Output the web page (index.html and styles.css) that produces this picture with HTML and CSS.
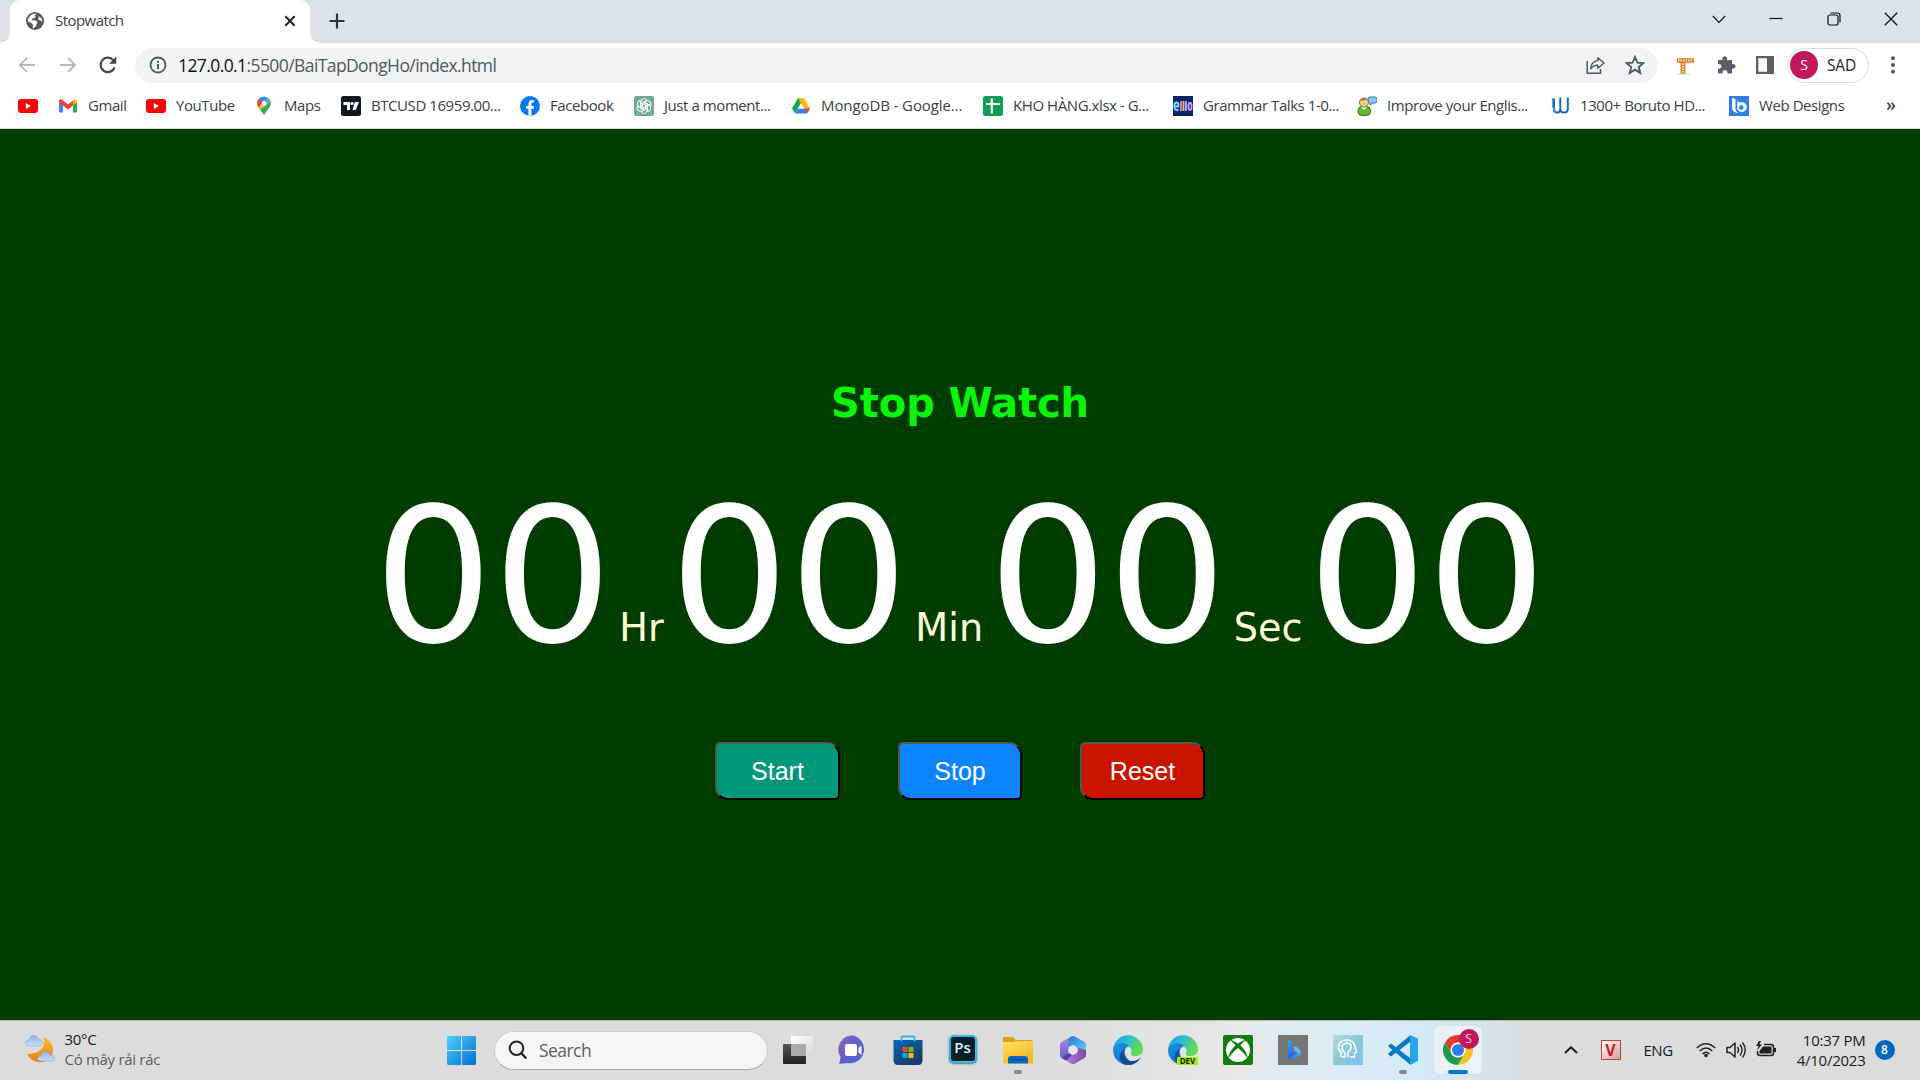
FILE: index.html
```
<!DOCTYPE html>
<html lang="en">
<head>
<meta charset="utf-8">
<title>Stopwatch</title>
<link rel="stylesheet" href="styles.css">
</head>
<body>
<header class="browser">
  <div class="tabstrip">
    <div class="tab">
      <svg class="favicon" viewBox="0 0 18 18"><circle cx="9" cy="9" r="9" fill="#54585d"/><path d="M11 1.8 8.6 3.4 9.8 5 7.5 6.4 6 6.5 5.8 8.3 9.8 8.4 11.6 10.2 10.4 13 8 16.3 6.8 16 6.9 12.4 4.8 10.8 1.8 9.6 2.4 6 5 3 8 1.8ZM13 4.2 12 7 14 8.6 16.2 9.4 15.6 6.6Z" fill="#fff"/></svg>
      <span class="tab-title">Stopwatch</span>
      <svg class="tab-close" viewBox="0 0 12 12"><path d="M1.3 1.3 10.7 10.7M10.7 1.3 1.3 10.7" stroke="#202124" stroke-width="2"/></svg>
    </div>
    <svg class="tab-new" viewBox="0 0 16 16"><path d="M8 .5V15.500M.5 8H15.500" stroke="#303236" stroke-width="2.2"/></svg>
    <div class="window-controls">
      <svg viewBox="0 0 14 14"><path d="M.8 4 7 10.500 13.200 4" fill="none" stroke="#111" stroke-width="1.200"/></svg>
      <svg viewBox="0 0 14 14"><path d="M.5 6.500H13.500" stroke="#111" stroke-width="1.200"/></svg>
      <svg viewBox="0 0 14 14"><rect x="1" y="3" width="10" height="10" rx="2" fill="none" stroke="#111" stroke-width="1.200"/><path d="M3.500 1H10.500Q13 1 13 3.500V10.500" fill="none" stroke="#111" stroke-width="1.200"/></svg>
      <svg viewBox="0 0 14 14"><path d="M.8.8 13.200 13.200M13.200.8.8 13.200" stroke="#111" stroke-width="1.300"/></svg>
    </div>
  </div>

  <div class="toolbar">
    <div class="nav-buttons">
      <svg viewBox="0 0 20 20"><path d="M18 10H3M10 2.800 2.800 10 10 17.200" fill="none" stroke="#b5b8bc" stroke-width="1.800"/></svg>
      <svg viewBox="0 0 20 20"><path d="M2 10H17M10 2.800 17.200 10 10 17.200" fill="none" stroke="#b5b8bc" stroke-width="1.800"/></svg>
      <svg viewBox="0 0 20 20"><path d="M16.600 12.300A7.200 7.200 0 1 1 15.200 5.100" fill="none" stroke="#45484d" stroke-width="2.200"/><path d="M18.300 1.500V8.700H11Z" fill="#45484d"/></svg>
    </div>
    <div class="omnibox">
      <svg class="info" viewBox="0 0 18 18"><circle cx="9" cy="9" r="7.500" fill="none" stroke="#54585d" stroke-width="1.800"/><path d="M9 8V13.200M9 4.800V6.700" stroke="#54585d" stroke-width="2"/></svg>
      <span class="url"><b class="host">127.0.0.1</b>:5500/BaiTapDongHo/index.html</span>
      <svg class="omni-icon" viewBox="0 0 20 20"><path d="M2.200 6V18.200H15.500V14" fill="none" stroke="#54585d" stroke-width="1.500"/><path d="M12.800 2.800 19 8 12.800 13.200V10.300C9.300 10 7.500 11.300 5.700 13.800 6 8.500 8.500 5.900 12.800 5.600Z" fill="none" stroke="#54585d" stroke-width="1.400" stroke-linejoin="round"/></svg>
      <svg class="omni-icon" viewBox="0 0 20 20"><path d="M10 2 12.300 7.600 18.300 8.100 13.800 12 15.200 17.900 10 14.700 4.800 17.900 6.200 12 1.700 8.100 7.700 7.600Z" fill="none" stroke="#54585d" stroke-width="1.900"/></svg>
    </div>
    <div class="extensions">
      <svg viewBox="0 0 20 20"><path d="M0 5.500H17" stroke="#d98530" stroke-width="4.600"/><path d="M6 3V18.800" stroke="#d98530" stroke-width="5"/><path d="M1 5.300H16" stroke="#ffd996" stroke-width="1.900" stroke-dasharray="1.500 1"/><path d="M6 8.500V18" stroke="#ffd996" stroke-width="2.200" stroke-dasharray="1.500 1"/><path d="M0 19.300H13" stroke="#ddd"/></svg>
      <svg viewBox="0 0 20 20"><path d="M2 5H6.500C6 2.800 7 1.300 8.800 1.300S11.500 2.800 11 5H16V9C18 8.700 19.500 9.500 19.500 11.300S18 13.800 16 13.500V18.500H11.500C11.700 16 10.500 15 9 15S6.300 16 6.500 18.500H2V13.800C4.500 14 5.500 12.800 5.500 11.300S4.500 8.800 2 9Z" fill="#5c6066"/></svg>
      <svg viewBox="0 0 20 20"><path d="M1 1H19V19H1ZM3.300 3.300V16.700H12V3.300Z" fill="#5c6066" fill-rule="evenodd"/></svg>
    </div>
    <div class="profile"><span class="avatar">S</span><span>SAD</span></div>
    <svg class="kebab" viewBox="0 0 4 18"><circle cx="2" cy="2.200" r="2"/><circle cx="2" cy="9" r="2"/><circle cx="2" cy="15.800" r="2"/></svg>
  </div>

  <nav class="bookmarks">
    <a class="bookmark"><svg viewBox="0 0 20 20"><rect y="3" width="20" height="14" rx="3" fill="#f00"/><path d="M7.800 7V13L13 10Z" fill="#fff"/></svg></a>
    <a class="bookmark"><svg viewBox="0 0 20 20"><path d="M1 5V16.500H5V9L1 5Z" fill="#4285f4"/><path d="M15 9V16.500H19V5Z" fill="#34a853"/><path d="M1 6.500V5C1 3 3.500 2.800 4.500 4L10 8.500 15.500 4 15 9.500 10 13.500 5 9.500Z" fill="#ea4335"/><path d="M15 9.500V4.400C16.500 2.800 19 3.200 19 5.500V6.500Z" fill="#fbbc04"/></svg><span>Gmail</span></a>
    <a class="bookmark"><svg viewBox="0 0 20 20"><rect y="3" width="20" height="14" rx="3" fill="#f00"/><path d="M7.800 7V13L13 10Z" fill="#fff"/></svg><span>YouTube</span></a>
    <a class="bookmark"><svg viewBox="0 0 20 20"><path d="M10 .8C5.800.8 3.300 4 3.300 7.500 3.300 12 8 14.500 10 19.500 12 14.500 16.800 12 16.800 7.500 16.800 4 14.200.8 10 .8Z" fill="#34a853"/><path d="M3.300 7.500C3.300 5.500 4 4 5 2.900L9 6 4.600 11.200C3.800 10 3.300 9 3.300 7.500Z" fill="#ea4335"/><path d="M5 2.900C7 .4 11 .2 13.500 1.900L9 6.500Z" fill="#4285f4"/><path d="M13.500 1.900C15 2.700 16 4 16.500 5.500L11 10 6.500 13.700 4.600 11.200Z" fill="#fbbc04"/><path d="M13.500 1.900 16.500 5.500 12 8 10.500 5.300Z" fill="#5b9bf5"/><circle cx="10" cy="7.400" r="2.500" fill="#fff"/></svg><span>Maps</span></a>
    <a class="bookmark"><svg viewBox="0 0 20 20"><rect width="20" height="20" rx="2.500" fill="#131722"/><path d="M2.500 6H9V14H6V9H2.500ZM13.800 6H18L14.700 14H11.500Z" fill="#fff"/><circle cx="11" cy="7.500" r="1.600" fill="#fff"/></svg><span>BTCUSD 16959.00...</span></a>
    <a class="bookmark"><svg viewBox="0 0 20 20"><circle cx="10" cy="10" r="10" fill="#0878ee"/><path d="M8.500 19.800V12.800H6V10H8.500V7.800C8.500 5.300 10 4 12.200 4L14 4.200V6.600H12.700C11.600 6.600 11.400 7.200 11.400 8V10H14L13.600 12.800H11.400V19.800Z" fill="#fff"/></svg><span>Facebook</span></a>
    <a class="bookmark"><svg viewBox="0 0 20 20"><rect width="20" height="20" rx="2" fill="#70a797"/><g fill="none" stroke="#fff" stroke-width="1"><path d="M7 11V5.500A3.300 3.300 0 0 1 13 4L8.500 6.800V10" /><path d="M7 11V5.500A3.300 3.300 0 0 1 13 4L8.500 6.800V10" transform="rotate(60 10 10)"/><path d="M7 11V5.500A3.300 3.300 0 0 1 13 4L8.500 6.800V10" transform="rotate(120 10 10)"/><path d="M7 11V5.500A3.300 3.300 0 0 1 13 4L8.500 6.800V10" transform="rotate(180 10 10)"/><path d="M7 11V5.500A3.300 3.300 0 0 1 13 4L8.500 6.800V10" transform="rotate(240 10 10)"/><path d="M7 11V5.500A3.300 3.300 0 0 1 13 4L8.500 6.800V10" transform="rotate(300 10 10)"/></g></svg><span>Just a moment...</span></a>
    <a class="bookmark wide"><svg viewBox="0 0 20 20"><path d="M7 2H13L9 9 4 17.500 1 12.500Z" fill="#11a75c"/><path d="M7 2H13L19 12.500H13Z" fill="#ffba00"/><path d="M7 12.500H19L16 17.500H4Z" fill="#3f7ee8"/><path d="M14 12.500H19L16 17.500Z" fill="#ea4335"/><path d="M10 7.200 13 12.500H7Z" fill="#fff"/></svg><span>MongoDB - Google...</span></a>
    <a class="bookmark"><svg viewBox="0 0 20 20"><rect width="20" height="20" rx="2.500" fill="#0f9d58"/><path d="M8.800 2.500V17.500M3 8H17" stroke="#fff" stroke-width="2.200"/></svg><span>KHO HÀNG.xlsx - G...</span></a>
    <a class="bookmark"><svg viewBox="0 0 20 20"><path fill="#0b2468" d="M0 0H20V20H0Z"/><g fill="none" stroke-width="1.900"><path d="M2 10.500H5.300V8Q5.300 6.500 3.500 6.500T1.500 9V12Q1.500 14 5.500 14" stroke="#76e0ed"/><path d="M8 5V15" stroke="#e678dd"/><path d="M10.500 5V15" stroke="#ddc955"/><path d="M13 5V15" stroke="#9af"/><rect x="15.500" y="7" width="3" height="7" rx="1.500" stroke="#e09af0"/></g></svg><span>Grammar Talks 1-0...</span></a>
    <a class="bookmark"><svg viewBox="0 0 20 20"><rect x="1" y="10.500" width="12.500" height="9" rx="4" fill="#62b92b" stroke="#346e20"/><path d="M4 11 7 14 10 11" fill="#fff"/><circle cx="7" cy="6.500" r="4.500" fill="#f5cc81" stroke="#946b2c"/><path d="M3 5Q5 .8 10 3L8 4Z" fill="#a7682a"/><path d="M12 1H18Q20 1 20 3V5Q20 7 18 7H16L13 9V6.500Q11 6 11 4Q11 1 12 1Z" fill="#8dc4f3" stroke="#3576bb"/></svg><span>Improve your Englis...</span></a>
    <a class="bookmark"><svg viewBox="0 0 20 20"><path d="M4 2.500V13Q4 16.500 7 16.500 10.300 16.500 10.300 13V1.500M10.300 13Q10.300 16.500 14 16.500 17.800 16.500 17.800 13V1.500" fill="none" stroke="#1769c2" stroke-width="2"/><path d="M2.500 2V11L6 16" fill="none" stroke="#51a4e5" stroke-width="1.200"/></svg><span>1300+ Boruto HD...</span></a>
    <a class="bookmark"><svg viewBox="0 0 20 20"><path fill="#2d7fe3" d="M0 0H20V20H0Z"/><path d="M3 2 6.500 3V12Q6.500 16 10 17 3 17 3 11Z" fill="#fff"/><path d="M8.500 3Q8.500 6 11 6.500A5 5 0 1 1 8 12Z" fill="#e4f1ff"/><circle cx="12.300" cy="11.500" r="2.200" fill="#2d7fe3"/></svg><span>Web Designs</span></a>
    <a class="more">»</a>
  </nav>
</header>

<main class="stopwatch">
  <h1 class="title">Stop Watch</h1>
  <div class="time">
    <div><span class="digit">00</span><span class="unit">Hr</span></div>
    <div><span class="digit">00</span><span class="unit">Min</span></div>
    <div><span class="digit">00</span><span class="unit">Sec</span></div>
    <div><span class="digit">00</span></div>
  </div>
  <div class="buttons">
    <button class="btn start">Start</button>
    <button class="btn stop">Stop</button>
    <button class="btn reset">Reset</button>
  </div>
</main>

<footer class="taskbar">
  <div class="weather">
    <svg viewBox="0 0 30 30"><defs><linearGradient id="moon" x2="0" y2="1"><stop stop-color="#f5c02d"/><stop offset="1" stop-color="#f07b18"/></linearGradient><linearGradient id="cloud" x2="0" y2="1"><stop stop-color="#8eb2ee"/><stop offset="1" stop-color="#c9dcf7"/></linearGradient></defs><path d="M18 3C22 12 16 20 2 20 6 28 17 31 24 25S29 7 18 3Z" fill="url(#moon)"/><path d="M4 12C-1 12-1 6 4 6 5 0 12 0 13 5 19 5 19 12 14 12Z" fill="url(#cloud)" stroke="#87a8dc" stroke-width=".6"/><path d="M16 27C11 27 12 22 16 22 17 16 24 16 25 21 31 21 31 27 27 27Z" fill="url(#cloud)" stroke="#87a8dc" stroke-width=".6"/></svg>
    <div class="weather-text"><span>30°C</span><span class="muted">Có mây rải rác</span></div>
  </div>
  <svg class="windows" viewBox="0 0 29 29"><defs><linearGradient id="win" x2="1" y2="1"><stop stop-color="#4cd0ff"/><stop offset="1" stop-color="#0070d0"/></linearGradient></defs><path d="M1 0H14V14H0V1ZM15 0H28L29 1V14H15ZM0 15H14V29H1L0 28ZM15 15H29V28L28 29H15Z" fill="url(#win)"/></svg>
  <div class="search">
    <svg viewBox="0 0 20 20"><circle cx="8.500" cy="8.200" r="6.800" fill="none" stroke="#222" stroke-width="2"/><path d="M13 13 18.300 18.500" stroke="#222" stroke-width="2.400"/></svg>
    <span>Search</span>
  </div>
  <div class="apps">
    <div class="app"><svg viewBox="0 0 30 30"><defs><linearGradient id="tv1" x2="0" y2="1"><stop stop-color="#555"/><stop offset="1" stop-color="#222"/></linearGradient><linearGradient id="tv2" x2="1" y2="1"><stop stop-color="#fff"/><stop offset="1" stop-color="#d8d8d8"/></linearGradient></defs><rect y="9" width="23" height="20" rx="1" fill="url(#tv1)"/><rect x="8" y="1" width="22" height="20" rx="1" fill="url(#tv2)"/><path d="M8 9H23V21H8Z" fill="#aaa"/></svg></div>
    <div class="app"><svg viewBox="0 0 30 30"><defs><linearGradient id="chat" x2="1" y2=".8"><stop stop-color="#a065a8"/><stop offset=".5" stop-color="#6160cc"/><stop offset="1" stop-color="#5961d4"/></linearGradient></defs><path d="M15 .5A14 14 0 1 1 9 28Q5 29 .8 28.600 2.500 26 2.500 22A14 14 0 0 1 15 .5Z" fill="url(#chat)"/><rect x="7" y="9" width="12" height="12" rx="2" fill="#fff"/><path d="M20.500 13 23.500 10.500V20L20.500 17.500Z" fill="#fff"/></svg></div>
    <div class="app"><svg viewBox="0 0 30 30"><defs><linearGradient id="store" x2=".6" y2="1"><stop stop-color="#006bb8"/><stop offset="1" stop-color="#1b3a67"/></linearGradient></defs><path d="M.5 5H29.500V25Q29.500 30 25 30H5Q.5 30 .5 25Z" fill="url(#store)"/><path d="M8.500 6.500V2.500Q8.500 1.500 9.500 1.500H20.500Q21.500 1.500 21.500 2.500V6.500" fill="none" stroke="#28b7f2" stroke-width="1.800"/><path fill="#f25022" d="M9.500 12H14.500V17H9.500Z"/><path fill="#7fba00" d="M15.500 12H20.500V17H15.500Z"/><path fill="#00a4ef" d="M9.500 18H14.500V23H9.500Z"/><path fill="#ffb900" d="M15.500 18H20.500V23H15.500Z"/></svg></div>
    <div class="app"><span class="ps">Ps</span></div>
    <div class="app running"><svg viewBox="0 0 30 30"><defs><linearGradient id="folder" x2=".5" y2="1"><stop stop-color="#ffe06c"/><stop offset="1" stop-color="#f6b71d"/></linearGradient></defs><path d="M0 2H10L13 5H29Q30 5 30 6V15H0Z" fill="#dea00b"/><path d="M0 7H10L13 6H30V28.500H0Z" fill="url(#folder)"/><path d="M5 28.500V24Q5 21 8 21H22Q25 21 25 24V28.500Z" fill="#0968be"/><path d="M8 24.500H22" stroke="#054a8b" stroke-width="1.500"/></svg></div>
    <div class="app"><svg viewBox="0 0 30 30"><defs><linearGradient id="mb" x2=".8" y2="1"><stop stop-color="#2b6fd6"/><stop offset="1" stop-color="#5ad4f8"/></linearGradient><linearGradient id="mp" x2="0" y2="1"><stop stop-color="#b08ae6"/><stop offset="1" stop-color="#5a5cc6"/></linearGradient><linearGradient id="mr" x2="1"><stop stop-color="#bf86ea"/><stop offset="1" stop-color="#7a4aa0"/></linearGradient></defs><path d="M13 1.500Q15 .3 17 1.500L26.500 7Q28 8 28 10V18L19.500 13 15 10 10 12.500V4Z" fill="url(#mb)"/><path d="M13 1.500 3.500 7Q2 8 2 10V20Q2 22 3.500 23L8 25 10.500 17.500V3Z" fill="url(#mp)"/><path d="M28 15V20Q28 22 26.500 23L17 28.500Q15 29.600 13 28.500L3.500 23 12 19 15 20 19.500 17V12.500Z" fill="url(#mr)"/><path d="M3.500 23 11 18 14 20 8.500 25.500Z" fill="#3f4aa8"/><circle cx="15" cy="15" r="4.600" fill="#e4e4ea"/></svg></div>
    <div class="app"><svg viewBox="0 0 30 30"><defs><linearGradient id="edge1" x2="1" y2=".4"><stop stop-color="#1d9be0"/><stop offset=".5" stop-color="#2cc0cf"/><stop offset="1" stop-color="#66dc4c"/></linearGradient><linearGradient id="edge2" x2="1" y2="1"><stop stop-color="#1b96e2"/><stop offset="1" stop-color="#0a62c0"/></linearGradient></defs><g id="edge"><path d="M.3 12.500A15 15 0 0 1 30 14C30 19.500 26 21 22.500 21 19 21 17 20 18 18.500 19 16.500 19 14 16.500 12 12 7 4 7 .3 12.500Z" fill="url(#edge1)"/><path d="M.3 12.500C3 7.500 12 6 16.500 11.500 13 11.500 11.800 14 11.800 17 11.800 22 16 26 21 28.800A15 15 0 0 1 .3 12.500Z" fill="url(#edge2)"/><path d="M12.500 13.500C8 19 12 26 20 26 24 26 26 24 28 22.300 25 28 19.500 30.500 14 29.900 5 28 4.500 17 12.500 13.500Z" fill="#0f4a94"/></g></svg></div>
    <div class="app"><svg viewBox="0 0 30 30"><use href="#edge"/><rect x="9" y="22" width="21" height="8" rx="1" fill="#9df000"/></svg><span class="dev">DEV</span></div>
    <div class="app"><svg viewBox="0 0 30 30"><rect width="30" height="30" rx="2" fill="#107c10"/><circle cx="15" cy="15" r="12" fill="#fff"/><path d="M6.500 5.500C9 4.500 13 7 15 8.800 17 7 21 4.500 23.500 5.500 21 6 19 8 17.500 10.500 22 14.500 25 20 24.500 23.500 22 19 18 15.500 15 13 12 15.500 8 19 5.500 23.500 5 20 8 14.500 12.500 10.500 11 8 9 6 6.500 5.500Z" fill="#107c10"/></svg></div>
    <div class="app"><svg viewBox="0 0 30 30"><defs><linearGradient id="bing" x2=".8" y2="1"><stop stop-color="#36a8f5"/><stop offset=".6" stop-color="#2368ee"/><stop offset="1" stop-color="#5bc7df"/></linearGradient></defs><path fill="#767676" d="M0 0H30V30H0Z"/><path d="M10 5 14 6.500V18L23 15Q24 21 18 22L13 25Q10 25 10 21Z" fill="url(#bing)"/><path d="M15 11Q23 13 23 19L20 18 17 16Z" fill="#54c5ec"/></svg></div>
    <div class="app"><svg viewBox="0 0 30 30"><defs><linearGradient id="asst" x2="1" y2="1"><stop stop-color="#b9dedd"/><stop offset=".5" stop-color="#88c8d2"/><stop offset="1" stop-color="#7cc2f4"/></linearGradient></defs><path fill="url(#asst)" d="M0 0H30V30H0Z"/><path d="M8 22V17Q5 15 5.500 11 7 5 14 5 21 5 22 12L23.500 17 21.500 18V22H17M9 22H12V18Q9 16 9 12 10 8 14 8T18 12Q18 15 15 17V22" fill="none" stroke="#fff" stroke-width="1.500"/></svg></div>
    <div class="app running"><svg viewBox="0 0 30 30"><path d="M0 11 3 8.500 22 23V29.500L2 13Z" fill="#087dc3"/><path d="M0 19 3 21.500 22 7V.5L2 17Z" fill="#0878be"/><path d="M22 0 30 3.500V26L22 30V0Z" fill="#25a5ee"/></svg></div>
    <div class="app active"><svg viewBox="0 0 30 30"><circle cx="15" cy="15" r="15" fill="#fff"/><path d="M2 7.500A15 15 0 0 1 28 7.500H15A7.500 7.500 0 0 0 8.500 18.700Z" fill="#e33b2e"/><path d="M28 7.500A15 15 0 0 1 15 30L21.500 18.700A7.500 7.500 0 0 0 15 7.500Z" fill="#fcc31e"/><path d="M15 30A15 15 0 0 1 2 7.500L8.500 18.700A7.500 7.500 0 0 0 21.500 18.700Z" fill="#229a4b"/><circle cx="15" cy="15" r="7.200" fill="#fff"/><circle cx="15" cy="15" r="6" fill="#327ceb"/></svg><span class="mini-avatar">S</span></div>
  </div>
  <div class="tray">
    <svg class="chevron" viewBox="0 0 14 8"><path d="M1 7 7 1.200 13 7" fill="none" stroke="#1b1b1b" stroke-width="1.900"/></svg>
    <span class="unikey">V</span>
    <span class="lang">ENG</span>
    <svg class="status" viewBox="0 0 20 20"><g fill="none" stroke="#222" stroke-width="1.500"><path d="M.8 8Q10-.5 19.200 8M3.700 11Q10 5 16.300 11M6.500 14Q10 10.500 13.500 14"/></g><circle cx="10" cy="15.500" r="1.800" fill="#222"/></svg>
    <svg class="status" viewBox="0 0 20 20"><path d="M1 7.500H4L9 3V17L4 12.500H1Z" fill="none" stroke="#222" stroke-width="1.500" stroke-linejoin="round"/><path d="M11.500 7Q13.500 10 11.500 13M14 4.500Q18 10 14 15.500M16.500 2.500Q22 10 16.500 17.500" fill="none" stroke="#222" stroke-width="1.400"/></svg>
    <svg class="status" viewBox="0 0 20 20"><path d="M8 4.500H15Q17.500 4.500 17.500 7V13Q17.500 15.500 15 15.500H4Q1.500 15.500 1.500 13V11" fill="none" stroke="#222" stroke-width="1.500"/><path d="M7 6.500H15.500V13.500H3.500V11Z" fill="#222"/><path d="M18 8H20V12H18ZM3 1 0 6H2.500L1 10.500 6 4.500H3.500L5 1Z" fill="#222"/></svg>
    <div class="clock"><span>10:37 PM</span><span>4/10/2023</span></div>
    <span class="badge">8</span>
  </div>
</footer>
</body>
</html>
```
FILE: styles.css
```
* { box-sizing: border-box; }

body {
  margin: 0;
  width: 1920px;
  height: 1080px;
  overflow: hidden;
  display: flex;
  flex-direction: column;
  font-family: "Open Sans", "Noto Sans", sans-serif;
  color: #3c4043;
}

svg { display: block; flex: none; }

/* Browser chrome */
.browser {
  height: 129px;
  background: #fff;
  border-bottom: 1px solid #d5d7da;
}

.tabstrip {
  height: 43px;
  display: flex;
  align-items: center;
  padding-left: 10px;
  background: #dee1e6;
}

.tab {
  position: relative;
  width: 300px;
  height: 43px;
  padding: 0 14px 2px 16px;
  display: flex;
  align-items: center;
  background: #fff;
  border-radius: 10px 10px 0 0;
}

.tab::before,
.tab::after {
  content: "";
  position: absolute;
  bottom: 0;
  width: 10px;
  height: 10px;
}

.tab::before { left: -10px; background: radial-gradient(circle at 0 0, #dee1e6 9.5px, #fff 10px); }
.tab::after { right: -10px; background: radial-gradient(circle at 100% 0, #dee1e6 9.5px, #fff 10px); }

.favicon { width: 18px; height: 18px; }
.tab-title { margin-left: 11px; padding-bottom: 2px; font-size: 15px; letter-spacing: -0.55px; }
.tab-close { width: 12px; height: 12px; margin-left: auto; }
.tab-new { width: 16px; height: 16px; margin: 0 0 1px 19px; }

.window-controls {
  display: flex;
  gap: 43.4px;
  margin: 0 22px 6px auto;
}

.window-controls svg { width: 14px; height: 14px; }

.toolbar {
  height: 45px;
  padding-bottom: 1px;
  display: flex;
  align-items: center;
}

.nav-buttons {
  display: flex;
  gap: 20.5px;
  width: 135px;
  padding-left: 17px;
}

.nav-buttons svg,
.omni-icon,
.extensions svg { width: 20px; height: 20px; }

.omnibox {
  width: 1523px;
  height: 35px;
  display: flex;
  align-items: center;
  padding: 0 13px 0 14px;
  border-radius: 18px;
  background: #f1f3f4;
}

.info { width: 18px; height: 18px; margin-right: 11px; }
.url { margin-right: auto; font-size: 17.5px; letter-spacing: -0.59px; color: #54575b; }
.host { font-weight: 400; color: #111; }
.omni-icon + .omni-icon { margin-left: 20px; }

.extensions { display: flex; gap: 19px; margin-left: 19px; }

.profile {
  width: 82px;
  height: 35px;
  margin-left: 12px;
  padding-left: 2px;
  display: flex;
  align-items: center;
  gap: 9px;
  border: 1px solid #dadce0;
  border-radius: 18px;
  font-size: 15.5px;
  letter-spacing: -0.2px;
  color: #202124;
}

.avatar {
  width: 28px;
  height: 28px;
  border-radius: 50%;
  background: #c2185b;
  color: #fff;
  text-align: center;
  line-height: 28px;
  font-size: 14px;
}

.kebab { width: 4px; height: 18px; margin-left: 21.5px; fill: #54585d; }

.bookmarks {
  height: 35px;
  padding-left: 18px;
  display: grid;
  grid-template-columns: 40px 88px 108px 87px 179px 114px 157px 192px 190px 184px 193px 179px 158px auto;
  align-items: center;
  font-size: 15px;
  letter-spacing: -0.43px;
  white-space: nowrap;
}

.bookmark { display: flex; align-items: center; gap: 10px; }
.bookmark svg { width: 20px; height: 20px; }
.bookmark span { padding-bottom: 1px; }
.wide { letter-spacing: -0.1px; }
.more { font-size: 18px; line-height: 20px; padding-bottom: 3px; margin-left: -1px; font-weight: 600; }

/* Stopwatch page */
.stopwatch {
  height: 891px;
  padding-top: 250px;
  display: flex;
  flex-direction: column;
  align-items: center;
  background: #003c00;
  font-family: "DejaVu Sans", sans-serif;
}

.title {
  margin: 0;
  font-size: 40px;
  line-height: 48px;
  letter-spacing: -0.1px;
  color: #0bf50b;
}

.time {
  margin-top: 48.5px;
  display: grid;
  grid-template-columns: 296px 318.4px 319.6px 238.5px;
  line-height: 200px;
}

.time > div { display: flex; align-items: baseline; height: 200px; }
.digit { font-size: 187.5px; color: #fff; }
.unit { margin-left: 7px; font-size: 38.2px; color: #ffffd4; }

.buttons { display: flex; gap: 58px; margin-top: 66.5px; }

.btn {
  width: 124.5px;
  height: 58px;
  padding: 0;
  border: 2px solid;
  border-color: #5a5450 #000 #000 #5a5450;
  border-radius: 5px 13px 5px 13px;
  font: 25px "Liberation Sans", sans-serif;
  color: #fff;
}

.start { background: #009879; }
.stop { background: #0d84ff; }
.reset { background: #c91400; }

/* Taskbar */
.taskbar {
  height: 60px;
  display: flex;
  align-items: center;
  border-top: 1px solid #b5b8b5;
  background: linear-gradient(90deg, #dcdcdc 0, #dcdcdc 1050px, #e8e8e8 1240px, #d9edf7 1350px, #d4eaf7 1430px, #dcdcdc 1530px);
  color: #1b1b1b;
}

.weather { width: 447px; padding: 0 0 4px 25px; display: flex; align-items: center; }
.weather svg { width: 30px; height: 30px; }
.weather-text { display: flex; flex-direction: column; margin-left: 9.5px; font-size: 15px; line-height: 20px; letter-spacing: -0.3px; }
.muted { color: #5c5c5c; }

.windows { width: 29px; height: 29px; }

.search {
  width: 274px;
  height: 39px;
  margin: 0 0 1px 17.500px;
  padding-left: 13px;
  display: flex;
  align-items: center;
  gap: 11.500px;
  border: 1px solid #ccc;
  border-bottom-color: #aaa;
  border-radius: 20px;
  background: #f5f5f5;
  font-size: 17.5px;
  letter-spacing: -0.55px;
  color: #606060;
}

.search svg { width: 20px; height: 20px; }

.apps { display: flex; gap: 7px; margin: 0 0 1px 6px; }

.app {
  position: relative;
  width: 48px;
  height: 48px;
  display: flex;
  align-items: center;
  justify-content: center;
  border-radius: 5px;
}

.app svg { width: 30px; height: 30px; }

.running::after,
.active::after {
  content: "";
  position: absolute;
  bottom: 0;
  width: 8px;
  height: 4px;
  border-radius: 2px;
  background: #868686;
}

.active { background: #eaf2f8; box-shadow: 0 0 1px #b5c0c8; }
.active::after { width: 20px; background: #0078d4; }

.ps {
  width: 28px;
  height: 28px;
  margin-bottom: 3px;
  border: 2.500px solid #29bdf2;
  border-radius: 5px;
  background: #051e28;
  box-shadow: 0 1px 2px #666;
  color: #dcf3fd;
  text-align: center;
  font-size: 15px;
  font-weight: 600;
  line-height: 21px;
}

.dev {
  position: absolute;
  left: 19px;
  bottom: 9px;
  width: 20px;
  text-align: center;
  font-size: 8px;
  font-weight: 700;
  line-height: 8px;
}

.mini-avatar {
  position: absolute;
  right: 3px;
  top: 3px;
  width: 20px;
  height: 20px;
  border-radius: 50%;
  background: #c2185b;
  color: #f7dce7;
  text-align: center;
  font-size: 12px;
  line-height: 20px;
}

.tray { display: flex; align-items: center; margin: 0 0 2px 82px; }
.chevron { width: 14px; height: 8px; }

.unikey {
  width: 20px;
  height: 20px;
  margin-left: 23px;
  border: 1px solid #b44;
  background: linear-gradient(135deg, #fff, #eec2c2 60%, #c9a0a0);
  color: #c91f27;
  text-align: center;
  font-size: 16px;
  font-weight: 700;
  line-height: 18px;
}

.lang { width: 52px; margin-left: 23px; font-size: 15px; letter-spacing: -0.5px; }
.status { width: 20px; height: 20px; }
.status + .status { margin-left: 10px; }

.clock {
  width: 90px;
  display: flex;
  flex-direction: column;
  text-align: right;
  font-size: 15px;
  line-height: 20px;
  letter-spacing: -0.25px;
}

.badge {
  width: 20px;
  height: 20px;
  margin-left: 9px;
  border-radius: 50%;
  background: #0067c0;
  color: #fff;
  text-align: center;
  font-size: 12px;
  font-weight: 600;
  line-height: 20px;
}
```
